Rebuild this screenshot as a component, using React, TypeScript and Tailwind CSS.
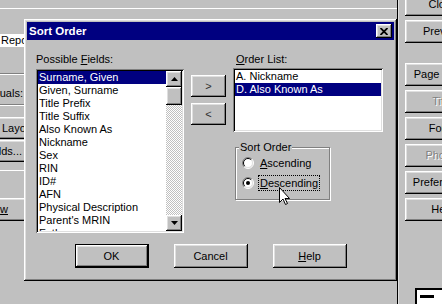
import React from "react";

const raised =
  "shadow-[inset_-1px_-1px_0_#000,inset_1px_1px_0_#fff,inset_-2px_-2px_0_#808080,inset_2px_2px_0_#dfdfdf]";
const sunken =
  "shadow-[inset_1px_1px_0_#808080,inset_-1px_-1px_0_#fff,inset_2px_2px_0_#000,inset_-2px_-2px_0_#dfdfdf]";

const fields = [
  "Surname, Given",
  "Given, Surname",
  "Title Prefix",
  "Title Suffix",
  "Also Known As",
  "Nickname",
  "Sex",
  "RIN",
  "ID#",
  "AFN",
  "Physical Description",
  "Parent's MRIN",
  "Father",
];

const sideButtons = [
  { label: "Close", mt: "mt-[-7px]" },
  { label: "Preview", mt: "mt-[4px]" },
  { label: "Page Setup", mt: "mt-[20px]" },
  { label: "Title", mt: "mt-[4px]", disabled: true },
  { label: "Fonts", mt: "mt-[4px]" },
  { label: "Photos", mt: "mt-[4px]", disabled: true },
  { label: "Preferences", mt: "mt-[4px]" },
  { label: "Help", mt: "mt-[4px]" },
];

const Radio: React.FC<{ checked?: boolean }> = ({ checked }) => (
  <svg width="12" height="12" viewBox="0 0 12 12" className="shrink-0">
    <circle cx="6" cy="6" r="5" fill="#fff" />
    <path d="M2.1 9.9 A5.5 5.5 0 0 1 9.9 2.1" stroke="#808080" fill="none" />
    <path d="M9.9 2.1 A5.5 5.5 0 0 1 2.1 9.9" stroke="#fff" fill="none" />
    <path d="M2.8 9.2 A4.5 4.5 0 0 1 9.2 2.8" stroke="#000" fill="none" />
    <path d="M9.2 2.8 A4.5 4.5 0 0 1 2.8 9.2" stroke="#dfdfdf" fill="none" />
    {checked && <circle cx="6" cy="6" r="2" fill="#000" />}
  </svg>
);

const SortDialog: React.FC = () => (
  <div
    className={`absolute left-[24px] top-[19px] flex h-[262px] w-[373px] flex-col bg-[#c0c0c0] p-[3px] ${raised}`}
  >
    {/* title bar */}
    <div className="flex h-[18px] shrink-0 items-center justify-between bg-[#000080] pl-[2px] pr-[2px]">
      <span className="text-[11.5px] font-bold text-white">Sort Order</span>
      <div className={`flex h-[14px] w-[16px] items-center justify-center bg-[#c0c0c0] ${raised}`}>
        <svg width="8" height="7" viewBox="0 0 8 7">
          <path d="M0.5 0 L7.5 7 M7.5 0 L0.5 7" stroke="#000" strokeWidth="1.8" />
        </svg>
      </div>
    </div>

    <div className="flex pl-[9px] pt-[13px]">
      {/* possible fields */}
      <div className="flex flex-col">
        <div className="h-[13px]">
          Possible <u>F</u>ields:
        </div>
        <div className={`mt-[3px] flex h-[164px] w-[148px] bg-white p-[2px] ${sunken}`}>
          <div className="flex-1 overflow-hidden">
            {fields.map((f, i) => (
              <div
                key={f}
                className={`h-[13px] whitespace-nowrap pl-[1px] ${
                  i === 0 ? "bg-[#000080] text-white" : ""
                }`}
              >
                {f}
              </div>
            ))}
          </div>
          <div className="flex w-[16px] flex-col">
            <div className={`flex h-[16px] shrink-0 items-center justify-center bg-[#c0c0c0] ${raised}`}>
              <svg width="7" height="4" viewBox="0 0 7 4">
                <path d="M3.5 0 L7 4 H0 Z" fill="#000" />
              </svg>
            </div>
            <div className={`h-[18px] shrink-0 bg-[#c0c0c0] ${raised}`} />
            <div className="flex-1 bg-[repeating-conic-gradient(#c0c0c0_0%_25%,#ffffff_0%_50%)] bg-[length:2px_2px]" />
            <div className={`flex h-[16px] shrink-0 items-center justify-center bg-[#c0c0c0] ${raised}`}>
              <svg width="7" height="4" viewBox="0 0 7 4">
                <path d="M0 0 H7 L3.5 4 Z" fill="#000" />
              </svg>
            </div>
          </div>
        </div>
      </div>

      {/* move buttons */}
      <div className="ml-[7px] flex flex-col gap-[6px] pt-[22px]">
        <div className={`flex h-[22px] w-[35px] items-center justify-center text-[#303030] ${raised}`}>
          &gt;
        </div>
        <div className={`flex h-[22px] w-[35px] items-center justify-center text-[#303030] ${raised}`}>
          &lt;
        </div>
      </div>

      {/* order list + direction */}
      <div className="ml-[7px] flex flex-col">
        <div className="h-[13px] pl-[3px]">
          <u>O</u>rder List:
        </div>
        <div className={`mt-[2px] h-[64px] w-[150px] bg-white p-[2px] ${sunken}`}>
          <div className="h-[13px] whitespace-nowrap pl-[1px]">A. Nickname</div>
          <div className="h-[13px] whitespace-nowrap bg-[#000080] pl-[1px] text-white">
            D. Also Known As
          </div>
        </div>
        <fieldset className="ml-[2px] mt-[9px] w-[95px] border border-[#808080] pb-[8px] pl-[6px] pt-[1px] shadow-[inset_1px_1px_0_#fff,1px_1px_0_#fff]">
          <legend className="-ml-[3px] bg-[#c0c0c0] px-[1px] leading-[13px]">Sort Order</legend>
          <div className="flex h-[16px] items-center gap-[4px]">
            <Radio />
            <span className="flex h-full items-center border border-transparent px-[1px]">
              <u>A</u>scending
            </span>
          </div>
          <div className="mt-[4px] flex h-[16px] items-center gap-[4px]">
            <Radio checked />
            <span className="flex h-full items-center border border-dotted border-black px-[1px]">
              <u>D</u>escending
            </span>
          </div>
        </fieldset>
      </div>
    </div>

    {/* dialog buttons */}
    <div className="mt-[11px] flex justify-center gap-[25px]">
      <div className="flex h-[24px] w-[74px] items-center justify-center border border-black">
        <div className={`flex h-full w-full items-center justify-center ${raised}`}>OK</div>
      </div>
      <div className={`flex h-[24px] w-[74px] items-center justify-center ${raised}`}>Cancel</div>
      <div className={`flex h-[24px] w-[74px] items-center justify-center ${raised}`}>
        <u>H</u>elp
      </div>
    </div>
  </div>
);

export default function App() {
  return (
    <div className="relative flex h-[304px] w-[442px] overflow-hidden bg-[#c0c0c0] font-['Liberation_Sans',Arial,sans-serif] text-[11px] leading-[13px] text-black">
      {/* left part of the report window */}
      <div className="flex w-[24px] shrink-0 flex-col overflow-hidden">
        <div className="mt-[8px] h-[1px] shrink-0 bg-white" />
        <div className="mt-[25px] h-[13px] shrink-0 whitespace-nowrap bg-white pl-[1px]">Report</div>
        <div className="mt-[26px] h-[1px] shrink-0 bg-[#808080]" />
        <div className="h-[1px] shrink-0 bg-white" />
        <div className="mt-[12px] flex h-[13px] shrink-0 justify-end whitespace-nowrap pr-[1px]">
          Individuals:
        </div>
        <div className="mt-[4px] h-[1px] shrink-0 bg-[#808080]" />
        <div className="h-[1px] shrink-0 bg-white" />
        <div className={`-ml-[10px] mt-[11px] flex h-[22px] w-[60px] shrink-0 items-center whitespace-nowrap pl-[12px] ${raised}`}>
          Layout
        </div>
        <div className={`-ml-[10px] mt-[1px] flex h-[22px] w-[60px] shrink-0 items-center justify-end whitespace-nowrap pr-[28px] ${raised}`}>
          Fields...
        </div>
        <div className="mt-[8px] h-[1px] shrink-0 bg-white" />
        <div className={`-ml-[10px] mt-[27px] flex h-[23px] w-[60px] shrink-0 items-center justify-end whitespace-nowrap pr-[42px] ${raised}`}>
          Previe<u>w</u>
        </div>
      </div>

      <div className="flex w-[373px] shrink-0 flex-col">
        <div className="mt-[8px] h-[1px] bg-white" />
      </div>
      <div className="w-[1px] shrink-0 bg-black" />
      <div className="w-[1px] shrink-0 bg-[#dfdfdf]" />

      {/* right button column */}
      <div className="flex min-w-0 flex-1 flex-col pl-[6px]">
        {sideButtons.map((b) => (
          <div
            key={b.label}
            className={`${b.mt} flex h-[23px] w-[75px] shrink-0 items-center justify-center whitespace-nowrap ${raised} ${
              b.disabled ? "text-[#808080] [text-shadow:1px_1px_0_#fff]" : ""
            }`}
          >
            {b.label}
          </div>
        ))}
        <div className="ml-[10px] mt-[67px] h-[20px] w-[40px] shrink-0 border-2 border-black bg-white pl-[3px] pt-[5px]">
          <div className="h-[3px] w-[14px] bg-black" />
        </div>
      </div>

      <SortDialog />

      {/* mouse pointer */}
      <svg
        width="12"
        height="19"
        viewBox="0 0 12 19"
        className="pointer-events-none absolute left-[279px] top-[187px]"
      >
        <path
          d="M0.5 0.5 V15.5 L4 12 L6.5 17.5 L8.5 16.5 L6 11.5 H10.5 Z"
          fill="#fff"
          stroke="#000"
          strokeLinejoin="miter"
        />
      </svg>
    </div>
  );
}
